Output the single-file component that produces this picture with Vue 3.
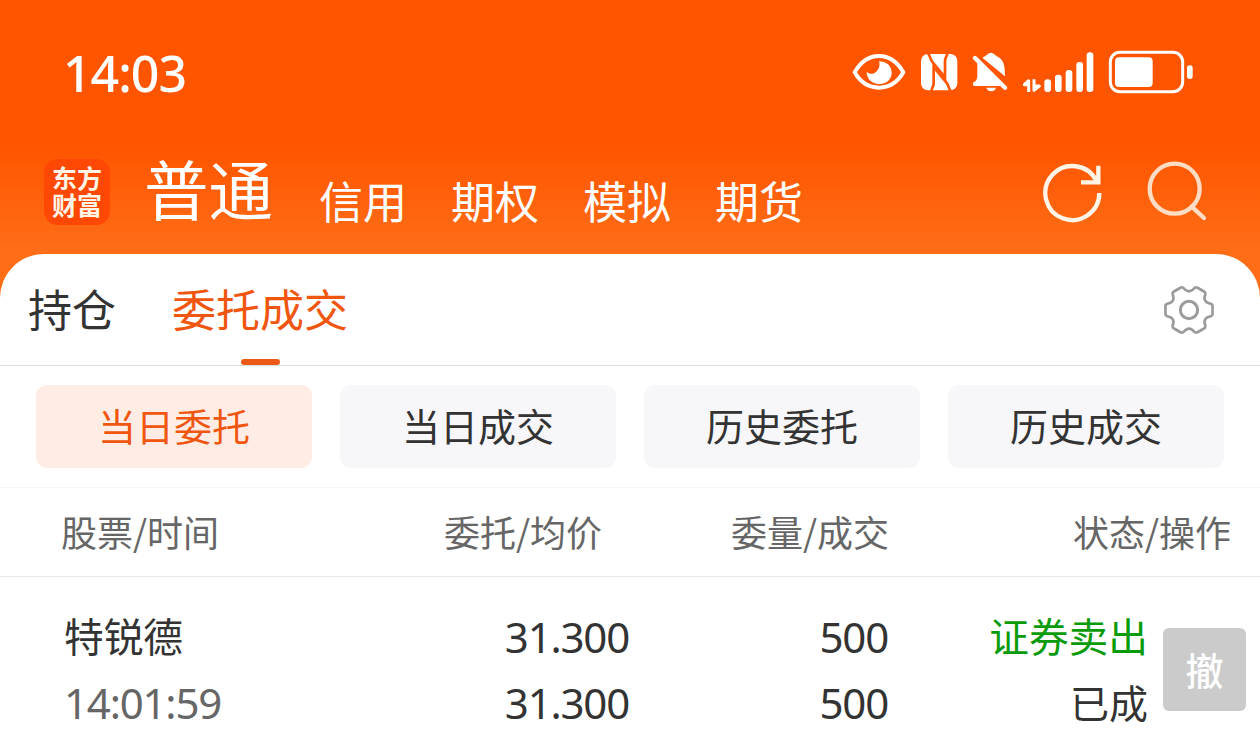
<script setup>
const accounts = ['信用', '期权', '模拟', '期货']
const filters = ['当日委托', '当日成交', '历史委托', '历史成交']
const bars = [
  { x: 102, y: 118 },
  { x: 134, y: 104 },
  { x: 166, y: 90 },
  { x: 198, y: 66 },
  { x: 229, y: 37 },
]

const polar = (r, deg) => {
  const a = (deg * Math.PI) / 180
  return `${(r * Math.cos(a)).toFixed(2)} ${(r * Math.sin(a)).toFixed(2)}`
}
const gear = [0, 60, 120, 180, 240, 300]
  .map((d, i) =>
    `${i ? 'L' : 'M'}${polar(68, d - 16)} Q${polar(73, d - 13)} ${polar(71.5, d - 9)} L${polar(71.5, d + 9)} Q${polar(73, d + 13)} ${polar(68, d + 16)} Q${polar(46, d + 30)} ${polar(68, d + 44)}`
  )
  .join(' ') + 'Z'
</script>

<template>
  <div class="screen">
    <div class="status">
      <span class="clock">14:03</span>
      <div class="status-icons">
        <svg class="eye" viewBox="36 36 162 120">
          <path d="M44 97C60 69 84 48 117 48S174 69 190 97C174 125 150 143 117 143S60 125 44 97Z" fill="none" stroke="#fff" stroke-width="12" stroke-linejoin="round" />
          <path d="M117 64C141 64 155 79 155 98C155 118 139 132 118 132C97 132 80 117 80 95C88 103 99 104 108 96C117 88 121 77 117 64Z" fill="#fff" />
        </svg>
        <svg class="nfc" viewBox="240 36 114 120">
          <rect x="243" y="42" width="109" height="109" rx="21" fill="#fff" />
          <path d="M262 38C270 44 270 56 275 63L315 112V62C315 53 322 49 322 38" fill="none" stroke="#ff5500" stroke-width="8" />
          <path d="M334 155C326 149 326 137 321 130L281 81V131C281 140 274 144 274 155" fill="none" stroke="#ff5500" stroke-width="8" />
        </svg>
        <svg class="bell" viewBox="396 33 108 123">
          <path d="M427 53Q436 49 441 44Q452 33 463 43Q465 46 473 50C491 59 495 76 495 109Z" fill="#fff" />
          <path d="M412 66L486 138H404Q397 138 399 129L409 121Q412 116 412 107Z" fill="#fff" />
          <path d="M405 54L495 143" fill="none" stroke="#fff" stroke-width="13" stroke-linecap="round" />
          <path d="M439 143H468C465 157 443 157 439 143Z" fill="#fff" />
        </svg>
        <svg class="signal" viewBox="38 30 214 130">
          <g fill="none" stroke="#fff" stroke-width="9" stroke-linejoin="round">
            <path d="M55 156V122L42 134H55M71 118V151L87 138H71" />
          </g>
          <rect v-for="b in bars" :key="b.x" :x="b.x" :y="b.y" width="20" :height="156 - b.y" rx="9" fill="#fff" />
        </svg>
        <svg class="battery" viewBox="294 30 258 133">
          <rect x="301" y="37" width="217" height="118" rx="29" fill="none" stroke="#fff" stroke-width="9" />
          <rect x="315" y="52" width="113" height="89" rx="12" fill="#fff" />
          <rect x="531" y="76" width="17" height="41" rx="8" fill="#fff" />
        </svg>
      </div>
    </div>

    <header class="header">
      <div class="logo">东方<br />财富</div>
      <span class="account-main">普通</span>
      <nav class="accounts">
        <span v-for="a in accounts" :key="a">{{ a }}</span>
      </nav>
      <svg class="refresh" viewBox="66 48 186 186">
        <path d="M238 144A81 81 0 1 1 229 107" fill="none" stroke="#fff4e6" stroke-width="13" />
        <path d="M235 62V112H183" fill="none" stroke="#fff4e6" stroke-width="13" />
      </svg>
      <svg class="search" viewBox="378 45 186 186">
        <circle cx="464" cy="131" r="75" fill="none" stroke="#ffdcc4" stroke-width="13" />
        <path d="M515 185L552 219" stroke="#ffdcc4" stroke-width="13" stroke-linecap="round" />
      </svg>
    </header>

    <main class="panel">
      <div class="tabs">
        <span class="tab">持仓</span>
        <span class="tab active">委托成交</span>
        <svg class="gear" viewBox="-78 -78 156 156">
          <g fill="none" stroke="#999b9d">
            <path :d="gear" stroke-width="8" stroke-linejoin="round" />
            <circle r="26" stroke-width="9" />
          </g>
        </svg>
      </div>

      <div class="filters">
        <button v-for="(f, i) in filters" :key="f" class="filter" :class="{ selected: i === 0 }">{{ f }}</button>
      </div>

      <div class="row head">
        <span>股票/时间</span>
        <span>委托/均价</span>
        <span>委量/成交</span>
        <span>状态/操作</span>
      </div>

      <div class="row order">
        <div class="cell"><span class="name">特锐德</span><span class="num time">14:01:59</span></div>
        <div class="cell"><span class="num">31.300</span><span class="num">31.300</span></div>
        <div class="cell"><span class="num">500</span><span class="num">500</span></div>
        <div class="cell"><span class="sell">证券卖出</span><span class="done">已成</span></div>
        <button class="cancel">撤</button>
      </div>
    </main>
  </div>
</template>

<style>
body {
  margin: 0;
  overflow: hidden;
}
</style>

<style scoped>
.screen {
  width: 1260px;
  height: 746px;
  overflow: hidden;
  display: flex;
  flex-direction: column;
  background: linear-gradient(#ff5500 0, #ff5500 148px, #ff6d17 250px, #ff6d17 100%);
  font-family: "Noto Sans CJK SC", "Noto Sans", sans-serif;
  color: #333;
}
svg {
  display: block;
  flex: none;
}
span,
button {
  white-space: nowrap;
}
button {
  border: 0;
  padding: 0;
  font-family: inherit;
}
.status {
  height: 144px;
  display: flex;
  align-items: center;
  justify-content: space-between;
  padding: 1px 66px 0 63px;
  box-sizing: border-box;
}
.clock {
  font: 500 50px/60px "Noto Sans", sans-serif;
  letter-spacing: -1px;
  color: #fff;
}
.status-icons {
  display: flex;
  height: 45px;
  align-items: flex-start;
}
.eye {
  width: 54px;
  height: 40px;
  margin: 2px 14px 0 0;
}
.nfc {
  width: 38px;
  height: 40px;
  margin: 2px 14px 0 0;
}
.bell {
  width: 36px;
  height: 41px;
  margin: 1px 14.67px 0 0;
}
.signal {
  width: 71.33px;
  height: 43.33px;
  margin-right: 14px;
}
.battery {
  width: 86px;
  height: 44.33px;
}
.header {
  height: 110px;
  display: flex;
  align-items: flex-start;
  padding: 0 52px 0 44px;
  color: #fff;
}
.logo {
  width: 66px;
  height: 66px;
  margin-top: 15px;
  border-radius: 14px;
  background: #ff4803;
  box-sizing: border-box;
  padding-top: 5px;
  text-align: center;
  color: #fff4e6;
  font-size: 25px;
  line-height: 27px;
  font-weight: 700;
}
.account-main {
  margin: 8px 0 0 34px;
  font-size: 64.5px;
  line-height: 70px;
}
.accounts {
  display: flex;
  gap: 44px;
  margin: 26px auto 0 46px;
  font-size: 44px;
  line-height: 60px;
}
.refresh {
  width: 62px;
  height: 62px;
  margin: 17px 42px 0 0;
}
.search {
  width: 62px;
  height: 62px;
  margin-top: 16px;
}
.panel {
  flex: 1;
  background: #fff;
  border-radius: 44px 44px 0 0;
}
.tabs {
  height: 111px;
  border-bottom: 1px solid #dedede;
  display: flex;
  align-items: flex-start;
  padding: 0 45.5px 0 28px;
  font-size: 44px;
}
.tab {
  position: relative;
  margin-right: 56px;
  height: 111px;
  line-height: 108px;
}
.active {
  color: #f0560f;
}
.active::after {
  content: "";
  position: absolute;
  left: 50%;
  bottom: 0;
  width: 39px;
  height: 6px;
  margin-left: -19.5px;
  border-radius: 3px;
  background: #ed5a17;
}
.gear {
  width: 52px;
  height: 52px;
  margin: 30px 0 0 auto;
}
.filters {
  display: grid;
  grid-template-columns: repeat(4, 276px);
  gap: 28px;
  height: 121px;
  box-sizing: border-box;
  padding: 19px 36px;
}
.filter {
  border-radius: 11px;
  background: #f7f7fa;
  color: #333;
  font-size: 38px;
  line-height: 80px;
  padding-bottom: 3px;
}
.selected {
  background: #ffede5;
  color: #f0560f;
}
.row {
  display: grid;
}
.head {
  grid-template-columns: 354px 248px 287px 342px;
  height: 90px;
  box-sizing: border-box;
  border-top: 1px solid #f5f5f5;
  border-bottom: 1px solid #e9e9e9;
  font-size: 36px;
  line-height: 87px;
  color: #666;
}
.head span {
  text-align: right;
}
.head span:first-child,
.cell:first-child {
  text-align: left;
}
.head span:first-child {
  padding-left: 61px;
}
.order {
  grid-template-columns: 354px 275px 259px 260px 83px;
  padding-top: 25px;
}
.cell {
  display: flex;
  flex-direction: column;
  text-align: right;
  line-height: 66px;
  font-size: 39.7px;
}
.cell:first-child {
  padding-left: 64px;
}
.num {
  font-family: "Noto Sans", sans-serif;
  font-size: 42px;
  letter-spacing: -1.2px;
  position: relative;
  top: 2px;
}
.time {
  color: #666;
}
.sell {
  color: #0a9b0a;
}
.done {
  font-size: 39px;
}
.cancel {
  width: 83px;
  height: 83px;
  margin: 26px 0 0 15px;
  border-radius: 6px;
  background: #cbcbcb;
  color: #fff;
  font-size: 38px;
  font-weight: 500;
  line-height: 80px;
  padding-bottom: 2px;
}
</style>
